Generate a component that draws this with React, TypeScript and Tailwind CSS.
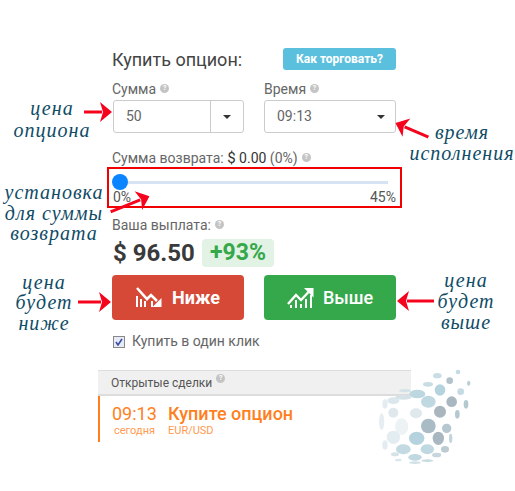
const notes = [
  { text: "цена", x: 52, y: 108 },
  { text: "опциона", x: 52, y: 130 },
  { text: "время", x: 462, y: 132 },
  { text: "исполнения", x: 462, y: 153 },
  { text: "установка", x: 54, y: 192 },
  { text: "для суммы", x: 54, y: 213 },
  { text: "возврата", x: 54, y: 233 },
  { text: "цена", x: 44, y: 282 },
  { text: "будет", x: 44, y: 302 },
  { text: "ниже", x: 44, y: 323 },
  { text: "цена", x: 466, y: 280 },
  { text: "будет", x: 466, y: 301 },
  { text: "выше", x: 466, y: 322 },
];

// x, y, rx, ry measured on a 3x crop starting at (340, 360)
const dots: [number, number, number, number, string][] = [
  [292, 47, 13, 8, "#c9dde4"], [354, 36, 7, 7, "#c5dbe3"], [329, 62, 10, 10, "#b3c2c9"],
  [386, 70, 5, 8, "#b9d0d9"], [264, 73, 15, 7, "#c9dde4"], [300, 90, 16, 17, "#b5d3de"],
  [362, 95, 10, 10, "#c4dbe3"], [195, 92, 18, 5, "#d3e2e7"], [232, 102, 24, 13, "#bdd7e0"],
  [335, 125, 16, 16, "#a9b8c0"], [378, 133, 7, 13, "#b5c7cf"], [265, 125, 22, 18, "#bfd8e1"],
  [190, 112, 25, 7, "#d5e3e8"], [160, 122, 18, 10, "#dbe7ec"], [300, 155, 18, 18, "#a9b6be"],
  [352, 163, 7, 13, "#b5c7cf"], [135, 132, 8, 14, "#e3ecf0"], [160, 158, 15, 15, "#dfe9ed"],
  [228, 160, 18, 15, "#dfe9ed"], [125, 185, 8, 25, "#e6eef1"], [185, 200, 20, 25, "#edf3f5"],
  [265, 198, 22, 22, "#a9bcc5"], [320, 205, 14, 14, "#b5c7cf"], [160, 232, 20, 20, "#e3ecf0"],
  [230, 235, 23, 20, "#b5d3de"], [295, 235, 17, 20, "#a9b8c0"], [332, 235, 5, 14, "#c3d3da"],
  [135, 255, 8, 14, "#e3ecf0"], [190, 268, 22, 15, "#c3dae3"], [262, 268, 20, 15, "#c0d8e1"],
  [165, 283, 12, 6, "#d5e3e8"], [315, 268, 12, 10, "#bccbd2"], [225, 292, 20, 10, "#c0d8e1"],
  [290, 285, 14, 7, "#c8d7dd"], [262, 302, 18, 4, "#c6dae2"], [225, 308, 18, 4, "#cfe0e6"],
  [175, 300, 10, 4, "#d9e6ea"],
];

function Help() {
  return (
    <span className="ml-[4px] inline-flex h-[9px] w-[9px] -translate-y-[4px] items-center justify-center rounded-full bg-[#c4c4c4] align-baseline text-[7px] leading-none font-bold text-white">
      ?
    </span>
  );
}

function Caret() {
  return <span className="h-0 w-0 border-x-[4px] border-t-[4px] border-x-transparent border-t-[#333]" />;
}

// drawn pointing right, centred on (x, y)
function Arrow({ x, y, len, rotate }: { x: number; y: number; len: number; rotate: number }) {
  return (
    <svg
      className="absolute"
      width={len}
      height="22"
      viewBox={`0 0 ${len} 22`}
      style={{ left: x - len / 2, top: y - 11, transform: `rotate(${rotate}deg)` }}
    >
      <path d={`M0 9.5H${len - 10}V12.5H0Z`} fill="#f5051d" />
      <path d={`M${len - 12} 1L${len} 11L${len - 12} 21L${len - 9} 11Z`} fill="#f5051d" />
    </svg>
  );
}

function DownIcon() {
  return (
    <svg width="27" height="21" viewBox="0 0 27 21" fill="#fff">
      <path d="M1 1L11 12L15 8L21 14" fill="none" stroke="#fff" strokeWidth="2.6" />
      <path d="M25.5 11V20H16.5Z" />
      <path d="M0 9H2V20H0ZM4 12H6V20H4ZM8 14H10V20H8ZM15 14H17V20H15Z" />
    </svg>
  );
}

function UpIcon() {
  return (
    <svg width="27" height="21" viewBox="0 0 27 21" fill="#fff">
      <path d="M1 17L9 8L14 13L22 4.5" fill="none" stroke="#fff" strokeWidth="2.4" />
      <path d="M17 1H26.5V10.5Z" />
      <path d="M3 18H5V21H3ZM8 13H10V21H8ZM13 17H15V21H13ZM18 12H20V21H18ZM23 8H25V21H23Z" />
    </svg>
  );
}

export default function App() {
  return (
    <div className="relative h-[491px] w-[515px] overflow-hidden bg-white font-['Roboto',sans-serif] text-[#555]">
      <div className="relative ml-[113px] w-[283px] pt-[48px]">
        <div className="flex h-[22px] items-center justify-between">
          <h2 className="-ml-px text-[18px] font-normal text-[#444]">Купить опцион:</h2>
          <button className="h-[22px] w-[113px] rounded-[3px] bg-[#5bc0de] text-[12px] font-bold text-white">Как торговать?</button>
        </div>

        <div className="mt-[9px] flex justify-between">
          <div className="w-[131px]">
            <div className="-ml-px h-[21px] text-[14px] leading-[21px] text-[#666]">
              Сумма
              <Help />
            </div>
            <div className="flex h-[33px] rounded-[3px] border border-[#ccc] text-[14px] text-[#666]">
              <div className="flex flex-1 items-center pl-[12px]">50</div>
              <div className="flex w-[33px] items-center justify-center border-l border-[#ccc]">
                <Caret />
              </div>
            </div>
          </div>
          <div className="w-[132px]">
            <div className="h-[21px] text-[14px] leading-[21px] text-[#666]">
              Время
              <Help />
            </div>
            <div className="flex h-[33px] items-center justify-between rounded-[3px] border border-[#ccc] pr-[10px] pl-[12px] text-[14px] text-[#666]">
              09:13
              <Caret />
            </div>
          </div>
        </div>

        <div className="mt-[15px] -ml-px h-[21px] text-[14px] leading-[21px] text-[#666]">
          Сумма возврата: <span className="text-[#333]"><span className="text-[15px]">$</span> 0.00</span> (0%)
          <Help />
        </div>

        <div className="relative h-[39px]">
          <div className="absolute top-[12px] left-0 h-[3px] w-[275px] bg-[#d5e3f5]" />
          <div className="absolute top-[5px] left-[-1px] h-[16px] w-[16px] rounded-full bg-[#0a84ff]" />
          <div className="absolute top-[19px] flex w-full justify-between text-[14px] leading-[18px] text-[#555]">
            <span>0%</span>
            <span>45%</span>
          </div>
        </div>

        <div className="mt-[7px] -ml-px h-[21px] text-[14px] leading-[21px] text-[#666]">
          Ваша выплата:
          <Help />
        </div>
        <div className="mt-[3px] flex h-[28px] items-center">
          <span className="w-[89px] text-[24px] font-bold text-[#3a3a3a]">$ 96.50</span>
          <span className="flex h-[28px] w-[72px] items-center justify-center rounded-[4px] bg-[#e2f2e4] text-[23px] font-bold text-[#35a84a]">+93%</span>
        </div>

        <div className="mt-[8px] flex justify-between">
          <button className="-ml-px flex h-[45px] w-[132px] items-center justify-center gap-[9px] rounded-[4px] bg-[#d64937] text-[18px] font-bold text-white">
            <DownIcon />
            Ниже
          </button>
          <button className="flex h-[45px] w-[132px] items-center justify-center gap-[9px] rounded-[4px] bg-[#36a84c] text-[18px] font-medium text-white">
            <UpIcon />
            Выше
          </button>
        </div>

        <label className="mt-[15px] flex h-[13px] items-center gap-[7px] text-[14px] text-[#666]">
          <span className="flex h-[12px] w-[12px] items-center justify-center border border-[#888] bg-[#e6ebf5]">
            <svg width="8" height="8" viewBox="0 0 8 8" fill="none" stroke="#3b4fa8" strokeWidth="1.6">
              <path d="M1 4L3 7L7 1" />
            </svg>
          </span>
          Купить в один клик
        </label>
      </div>

      <div className="relative mt-[22px] ml-[98px] w-[313px]">
        <div className="flex h-[26px] items-center border-t border-b-2 border-t-[#ddd] border-b-[#ddd] bg-[#f0f0f0] pl-[13px] text-[12px] text-[#555]">
          Открытые сделки
          <Help />
        </div>
        <div className="flex h-[46px] border-l-2 border-[#ff7f1e] pt-[7px] pl-[12px] text-[#ff7f1e]">
          <div className="flex w-[56px] flex-col items-start">
            <span className="text-[18px] leading-[21px]">09:13</span>
            <span className="ml-[2px] text-[11px] leading-[13px] text-[#ff9a52]">сегодня</span>
          </div>
          <div className="flex flex-col">
            <span className="text-[18px] leading-[21px] font-medium">Купите опцион</span>
            <span className="text-[11px] leading-[13px] text-[#ff9a52]">EUR/USD</span>
          </div>
        </div>
      </div>

      <svg className="absolute top-0 left-0 blur-[0.4px]" width="515" height="491" viewBox="0 0 515 491">
        {dots.map(([x, y, rx, ry, fill], i) => (
          <ellipse key={i} cx={x / 3 + 340} cy={y / 3 + 360} rx={rx / 3} ry={ry / 3} fill={fill} />
        ))}
      </svg>

      <div className="absolute top-[167px] left-[107px] h-[41px] w-[295px] border-2 border-[#f00000]" />

      <Arrow x={98} y={112} len={28} rotate={0} />
      <Arrow x={411.5} y={130} len={36} rotate={203} />
      <Arrow x={130} y={204} len={42} rotate={-22} />
      <Arrow x={94.5} y={301.5} len={33} rotate={0} />
      <Arrow x={415.5} y={300.5} len={37} rotate={180} />

      {notes.map((n) => (
        <div
          key={`${n.text}-${n.x}`}
          className="absolute w-[120px] -translate-x-1/2 text-center font-['Liberation_Serif',serif] text-[20px] leading-[20px] tracking-[1px] whitespace-nowrap text-[#0f4c66] italic"
          style={{ left: n.x, top: n.y - 10 }}
        >
          {n.text}
        </div>
      ))}
    </div>
  );
}
